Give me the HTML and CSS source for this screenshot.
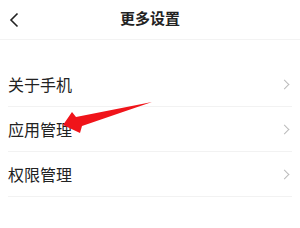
FILE: index.html
```html
<html>
    <head>
        <meta charset="utf-8">
        <link rel="stylesheet" href="styles.css">
    </head>
    <body>
        <div class="header">
            <svg class="back" width="10" height="16" viewBox="0 0 10 16">
                <path d="M8.5 1.5 L2 8 L8.5 14.5" fill="none" stroke="#222" stroke-width="1.6"/>
            </svg>
            <div class="title">更多设置</div>
        </div>
        <div class="list">
            <div class="row">
                <span class="label">关于手机</span>
                <span class="chev"></span>
            </div>
            <div class="row">
                <span class="label">应用管理</span>
                <span class="chev"></span>
            </div>
            <div class="row">
                <span class="label">权限管理</span>
                <span class="chev"></span>
            </div>
        </div>
        <svg class="arrow" width="300" height="228" viewBox="0 0 300 228">
            <polygon points="63,125 72,112 76,117 152,102 82,126 80,133" fill="#f0141a"/>
        </svg>
    </body>
</html>
```

FILE: styles.css
```css
*{
  margin:0px;
  box-sizing:border-box;
}

body{
  width:300px;
  height:228px;
  background:#fff;
  font-family:"Noto Sans CJK SC", sans-serif;
  color:#222;
  position:relative;
  overflow:hidden;
}

.header{
  height:40px;
  display:flex;
  align-items:center;
  justify-content:center;
  position:relative;
  border-bottom:1px solid #f3f3f3;
}

.back{
  position:absolute;
  left:9px;
  top:12px;
}

.title{
  font-size:15px;
  font-weight:700;
  margin-top:-4px;
}

.list{
  padding:22px 8px 0px 8px;
}

.row{
  height:45px;
  display:flex;
  align-items:center;
  justify-content:space-between;
  border-bottom:1px solid #f2f2f2;
}

.label{
  font-size:16px;
  line-height:20px;
}

.chev{
  width:7px;
  height:7px;
  border-top:1px solid #bbb;
  border-right:1px solid #bbb;
  transform:rotate(45deg);
  margin-right:4px;
}

.arrow{
  position:absolute;
  left:0px;
  top:0px;
}
```
